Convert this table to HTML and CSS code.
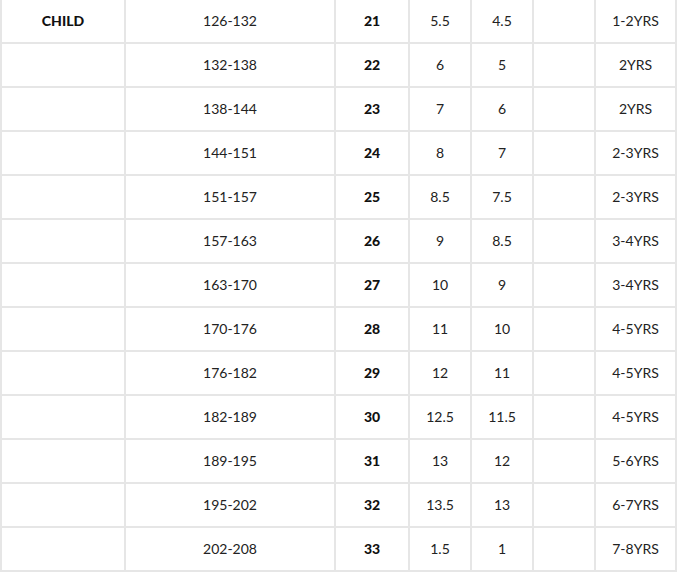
FILE: index.html
```html
<!DOCTYPE html>
<html>
<head>
<meta charset="utf-8">
<link rel="stylesheet" href="styles.css">
</head>
<body>
<table class="size-table">
  <colgroup>
    <col class="c-cat"><col class="c-height"><col class="c-eu"><col class="c-uk"><col class="c-us"><col class="c-blank"><col class="c-age">
  </colgroup>
  <tbody>
    <tr><td class="b">CHILD</td><td>126-132</td><td class="b">21</td><td>5.5</td><td>4.5</td><td></td><td>1-2YRS</td></tr>
    <tr><td></td><td>132-138</td><td class="b">22</td><td>6</td><td>5</td><td></td><td>2YRS</td></tr>
    <tr><td></td><td>138-144</td><td class="b">23</td><td>7</td><td>6</td><td></td><td>2YRS</td></tr>
    <tr><td></td><td>144-151</td><td class="b">24</td><td>8</td><td>7</td><td></td><td>2-3YRS</td></tr>
    <tr><td></td><td>151-157</td><td class="b">25</td><td>8.5</td><td>7.5</td><td></td><td>2-3YRS</td></tr>
    <tr><td></td><td>157-163</td><td class="b">26</td><td>9</td><td>8.5</td><td></td><td>3-4YRS</td></tr>
    <tr><td></td><td>163-170</td><td class="b">27</td><td>10</td><td>9</td><td></td><td>3-4YRS</td></tr>
    <tr><td></td><td>170-176</td><td class="b">28</td><td>11</td><td>10</td><td></td><td>4-5YRS</td></tr>
    <tr><td></td><td>176-182</td><td class="b">29</td><td>12</td><td>11</td><td></td><td>4-5YRS</td></tr>
    <tr><td></td><td>182-189</td><td class="b">30</td><td>12.5</td><td>11.5</td><td></td><td>4-5YRS</td></tr>
    <tr><td></td><td>189-195</td><td class="b">31</td><td>13</td><td>12</td><td></td><td>5-6YRS</td></tr>
    <tr><td></td><td>195-202</td><td class="b">32</td><td>13.5</td><td>13</td><td></td><td>6-7YRS</td></tr>
    <tr><td></td><td>202-208</td><td class="b">33</td><td>1.5</td><td>1</td><td></td><td>7-8YRS</td></tr>
  </tbody>
</table>
</body>
</html>
```
FILE: styles.css
```css
html, body {
  margin: 0;
  padding: 0;
  background: #ffffff;
}
body {
  font-family: "Lato", "Open Sans", sans-serif;
  color: #222222;
}
.size-table {
  margin-top: -2px;
  width: 677px;
  table-layout: fixed;
  border-collapse: separate;
  border-spacing: 2px;
  background: #e6e6e6;
}
.c-cat { width: 122px; }
.c-height { width: 208px; }
.c-eu { width: 72px; }
.c-uk { width: 60px; }
.c-us { width: 60px; }
.c-blank { width: 60px; }
.c-age { width: 79px; }
.size-table td {
  background: #ffffff;
  height: 42px;
  padding: 0;
  text-align: center;
  vertical-align: middle;
  font-size: 14px;
  line-height: 16px;
  font-weight: 400;
}
.size-table td.b {
  font-weight: 900;
  color: #111111;
}
```
